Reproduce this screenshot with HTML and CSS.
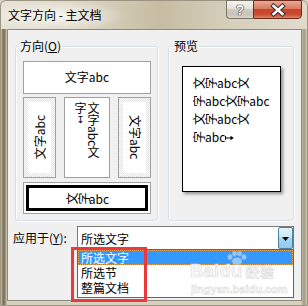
FILE: index.html
```html
<!DOCTYPE html>
<html lang="zh-CN">
<head>
<meta charset="utf-8">
<title>文字方向 - 主文档</title>
<link rel="stylesheet" href="styles.css">
</head>
<body>
<div class="window">
  <div class="titlebar">
    <div class="title">文字方向 - 主文档</div>
    <div class="caption-buttons">
      <div class="btn-help">?</div>
      <div class="btn-close">
        <svg width="47" height="17" viewBox="0 0 47 17">
          <path d="M19.5 5 L28.5 13 M28.5 5 L19.5 13" stroke="#3d3535" stroke-width="4.6" stroke-linecap="square"/>
          <path d="M19.5 5 L28.5 13 M28.5 5 L19.5 13" stroke="#ffffff" stroke-width="2.4" stroke-linecap="square"/>
        </svg>
      </div>
    </div>
  </div>
  <div class="client">
    <div class="groups">
      <div class="group group-dir">
        <span class="legend">方向(<u>O</u>)</span>
        <div class="opt opt-top">文字abc</div>
        <div class="opt-row">
          <div class="opt opt-v"><div class="inner"><span class="v-up">文字abc</span></div></div>
          <div class="opt opt-mid"><span class="v-text">文字abc文<br>字<span class="up">↧</span></span></div>
          <div class="opt opt-v"><div class="inner"><span class="v-down">文字abc</span></div></div>
        </div>
        <div class="opt opt-sel"><div class="sel-inner"><span class="r">文</span><span class="r">字</span>abc</div></div>
      </div>
      <div class="group group-preview">
        <span class="legend">预览</span>
        <div class="page">
          <div class="pl"><span class="r">文</span><span class="r">字</span>abc<span class="r">文</span></div>
          <div class="pl"><span class="r">字</span>abc<span class="r">文</span><span class="r">字</span>abc</div>
          <div class="pl"><span class="r">文</span><span class="r">字</span>abc<span class="r">文</span></div>
          <div class="pl"><span class="r">字</span>abc<svg class="end" width="9" height="6" viewBox="0 0 9 6"><path d="M0.5 1 V5 M0.5 3 H6" stroke="#000" stroke-width="1"/><path d="M5.5 0.8 L8.8 3 L5.5 5.2 Z" fill="#000"/></svg></div>
        </div>
      </div>
    </div>
    <div class="apply">
      <label class="apply-label">应用于(<u>Y</u>):</label>
      <div class="combo">
        <div class="combo-field">
          <span>所选文字</span>
          <div class="drop-btn"><svg width="7" height="4" viewBox="0 0 7 4"><path d="M0 0 H7 L3.5 4 Z" fill="#000"/></svg></div>
        </div>
        <div class="list">
          <div class="item sel">所选文字</div>
          <div class="item">所选节</div>
          <div class="item">整篇文档</div>
          <div class="watermark">
            <svg class="paw" width="22" height="14" viewBox="0 0 22 14">
              <g fill="rgba(255,255,255,0.45)" stroke="rgba(190,190,190,0.7)" stroke-width="0.8">
                <ellipse cx="4" cy="6" rx="2.2" ry="2.6"/>
                <ellipse cx="8.5" cy="2.6" rx="2.2" ry="2.4"/>
                <ellipse cx="13.5" cy="2.6" rx="2.2" ry="2.4"/>
                <ellipse cx="18" cy="6" rx="2.2" ry="2.6"/>
                <ellipse cx="11" cy="10.2" rx="4.6" ry="3.4"/>
              </g>
            </svg>
            <div class="wm-brand">Baidu<span class="wm-cn">经验</span></div>
            <div class="wm-url">jingyan.baidu.com</div>
          </div>
        </div>
        <div class="red-box"></div>
      </div>
    </div>
  </div>
</div>
</body>
</html>
```

FILE: styles.css
```css
* { box-sizing: border-box; }
html, body { margin: 0; padding: 0; }
body {
  width: 308px;
  height: 306px;
  overflow: hidden;
  font-family: "Noto Sans CJK SC", "Liberation Sans", sans-serif;
  font-size: 12px;
  color: #000;
  background: #d9d3c1;
}
.window {
  width: 308px;
  height: 306px;
  display: flex;
  flex-direction: column;
  border: 1px solid #9c9583;
  border-radius: 6px 6px 0 0;
  background: linear-gradient(90deg, #cfc8b3 0, #7e7058 2px, #8d7f65 4px, #d7d0be 6px, #d7d0be calc(100% - 6px), #a0977f calc(100% - 3px), #cec7b4 100%);
}
.titlebar {
  height: 28px;
  display: flex;
  justify-content: space-between;
  align-items: flex-start;
  border-radius: 5px 5px 0 0;
  background:
    radial-gradient(ellipse 70px 16px at 55px 15px, rgba(255,255,255,0.75), rgba(255,255,255,0) 100%),
    linear-gradient(90deg, #e6e2d6 0%, #d9d2bf 30%, #c6bca2 52%, #d6cfbc 75%, #e0dbcd 100%);
}
.title {
  margin-top: 7px;
  padding-left: 7px;
  line-height: 14px;
  font-size: 12px;
  color: #000;
}
.caption-buttons {
  display: flex;
  margin-top: -1px;
  margin-right: 5px;
}
.btn-help {
  width: 27px;
  height: 19px;
  border: 1px solid #7a7566;
  border-right: none;
  border-radius: 0 0 0 4px;
  background: linear-gradient(#f5f4f0 0%, #e3e0d8 45%, #cfcbc0 50%, #c8c4b8 80%, #d8d5cc 100%);
  text-align: center;
  font-family: "Liberation Sans", sans-serif;
  font-weight: bold;
  font-size: 14px;
  line-height: 18px;
  color: #f4f4f4;
  text-shadow: 0 0 1px #3a3a3a, 0 0 1px #3a3a3a, 0 0 1px #3a3a3a;
}
.btn-close {
  width: 49px;
  height: 19px;
  border: 1px solid #6e2b1d;
  border-radius: 0 0 4px 0;
  background: linear-gradient(#eaa895 0%, #da7b61 45%, #c6452b 50%, #c84a2f 78%, #df8566 100%);
  display: flex;
}
.btn-close svg { display: block; }
.client {
  flex: 1;
  margin: 0 5px 4px 6px;
  border: 1px solid #8e8a7e;
  background: #f0f0f0;
  position: relative;
}
.groups {
  display: flex;
  gap: 10px;
  margin: 16px 0 0 7px;
}
.group {
  position: relative;
  height: 175px;
  border: 1px solid #d5dfe5;
  border-radius: 3px;
  box-shadow: inset 1px 1px 0 #fff, 1px 1px 0 #fff;
}
.legend {
  position: absolute;
  top: -8px;
  left: 3px;
  padding: 0 1px;
  line-height: 14px;
  background: #f0f0f0;
}
.group-preview .legend { left: 4px; }
.legend u, .apply-label u { text-underline-offset: 1px; }
.group-dir {
  width: 143px;
  padding: 14px 6px 0 7px;
  display: flex;
  flex-direction: column;
}
.opt {
  border: 1px solid #a0a0a0;
  background: #fff;
}
.opt-top {
  height: 33px;
  display: flex;
  align-items: center;
  justify-content: center;
  padding-bottom: 3px;
}
.opt-row {
  display: flex;
  gap: 8px;
  margin-top: 3px;
  height: 81px;
}
.opt-v {
  width: 33px;
  padding: 4px;
  background: repeating-conic-gradient(#e2e2e2 0 25%, #fff 0 50%) 0 0 / 2px 2px;
}
.opt-v .inner {
  height: 100%;
  background: #fff;
  display: flex;
  align-items: center;
  justify-content: center;
}
.v-up {
  writing-mode: vertical-rl;
  text-orientation: sideways;
  transform: rotate(180deg);
  line-height: 14px;
}
.v-down {
  writing-mode: vertical-rl;
  text-orientation: sideways;
  line-height: 14px;
}
.opt-mid {
  width: 46px;
  display: flex;
  justify-content: center;
  padding-top: 4px;
}
.v-text {
  writing-mode: vertical-rl;
  line-height: 13px;
}
.up { text-orientation: upright; font-family: "DejaVu Sans", sans-serif; font-size: 10px; }
.opt-sel {
  margin-top: 4px;
  height: 32px;
  padding: 2px;
}
.sel-inner {
  height: 100%;
  border: 3px solid #000;
  display: flex;
  align-items: center;
  justify-content: center;
}
.r {
  display: inline-block;
  transform: rotate(-90deg);
}
.group-preview {
  width: 126px;
  padding: 19px 0 0 13px;
}
.page {
  width: 99px;
  height: 126px;
  border: 1px solid #000;
  background: #fff;
  box-shadow: 2px 2px 3px rgba(0,0,0,0.4);
  padding: 7px 0 0 10px;
  line-height: 18px;
  white-space: nowrap;
}
.end { vertical-align: 1px; }
.apply {
  display: flex;
  align-items: center;
  margin-top: 5px;
  height: 24px;
}
.apply-label {
  width: 69px;
  padding-left: 5px;
  line-height: 14px;
}
.combo {
  position: relative;
  width: 217px;
  height: 24px;
}
.combo-field {
  height: 24px;
  border: 1px solid #7a7a7a;
  background: #fff;
  display: flex;
  align-items: center;
  justify-content: space-between;
  padding-left: 3px;
}
.drop-btn {
  width: 15px;
  height: 22px;
  border: 1px solid #4f7ea3;
  border-radius: 2px;
  background: linear-gradient(#e2f2fb 0%, #c9e7f7 45%, #a6d7f1 50%, #8ecbeb 100%);
  display: flex;
  align-items: center;
  justify-content: center;
  padding-top: 1px;
}
.drop-btn svg { display: block; }
.list {
  position: absolute;
  left: 0;
  top: 23px;
  width: 217px;
  height: 49px;
  border: 1px solid #646464;
  background: #fff;
  overflow: hidden;
}
.item {
  height: 15px;
  line-height: 15px;
  padding-left: 3px;
}
.item.sel {
  background: #3399ff;
  color: #fff;
  outline: 1px dotted #e6a050;
  outline-offset: -1px;
}
.watermark {
  position: absolute;
  left: 112px;
  top: 0;
  width: 100px;
  height: 47px;
  pointer-events: none;
}
.paw {
  position: absolute;
  left: 36px;
  top: 1px;
}
.wm-brand {
  position: absolute;
  left: 0;
  top: 11px;
  font-family: "Liberation Sans", sans-serif;
  font-weight: bold;
  font-size: 18px;
  line-height: 20px;
  color: rgba(250,250,250,0.9);
  -webkit-text-stroke: 0.6px #d9d9d9;
  letter-spacing: 0.5px;
}
.wm-cn {
  font-family: "Noto Sans CJK SC", sans-serif;
  font-size: 14px;
  font-weight: bold;
  margin-left: 3px;
}
.wm-url {
  position: absolute;
  left: 1px;
  top: 33px;
  font-family: "Liberation Sans", sans-serif;
  font-weight: bold;
  font-size: 11px;
  line-height: 12px;
  color: rgba(250,250,250,0.9);
  -webkit-text-stroke: 0.5px #d9d9d9;
}
.red-box {
  position: absolute;
  left: -6px;
  top: 21px;
  width: 76px;
  height: 55px;
  border: 3px solid #ea3a3c;
}
```
